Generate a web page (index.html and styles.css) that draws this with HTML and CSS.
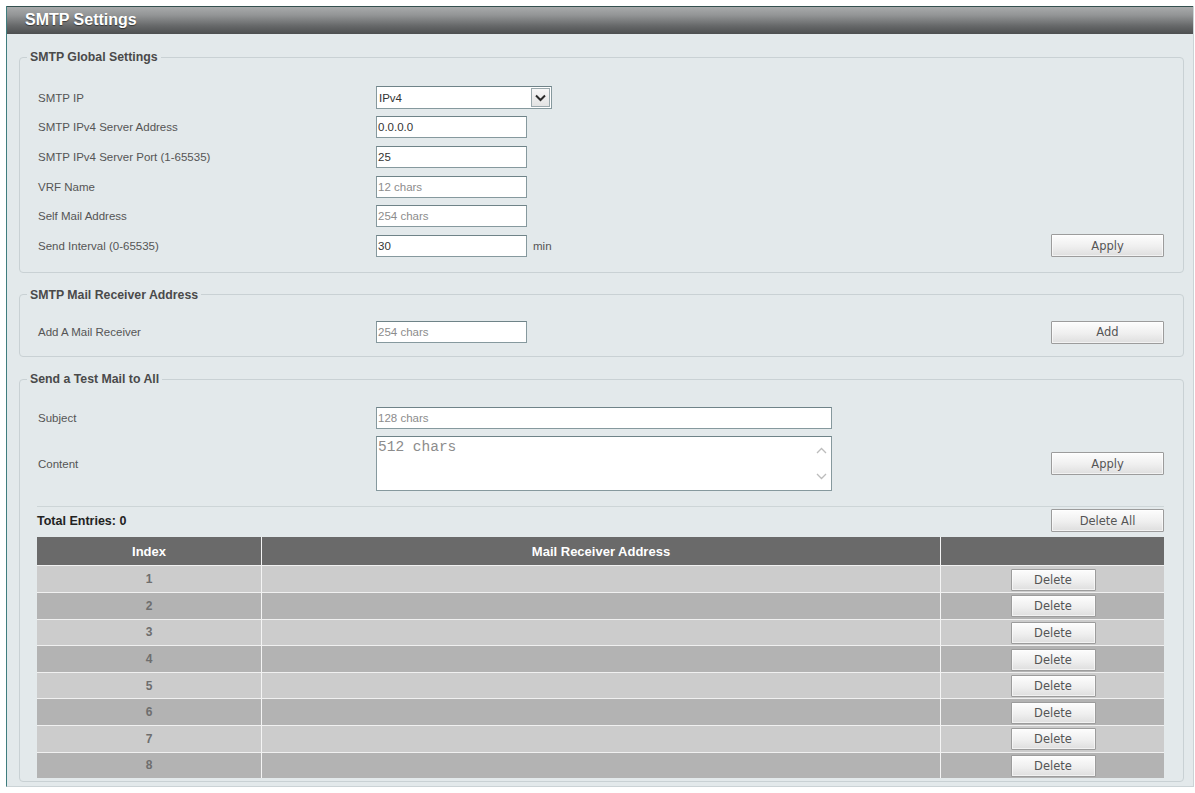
FILE: index.html
```html
<!DOCTYPE html>
<html>
<head>
<meta charset="utf-8">
<title>SMTP Settings</title>
<link rel="stylesheet" href="styles.css">
</head>
<body>
<div class="page">
  <div class="frame">
    <div class="titlebar">SMTP Settings</div>
    <div class="content">

      <fieldset class="group g1">
        <legend>SMTP Global Settings</legend>
        <div class="fs-body b1">
          <div class="row">
            <span class="lbl">SMTP IP</span>
            <div class="select">
              <span class="sel-val">IPv4</span>
              <span class="sel-btn"><svg width="11" height="8" viewBox="0 0 11 8"><path d="M1 1.5 L5.5 6 L10 1.5" fill="none" stroke="#2b2b2b" stroke-width="2"/></svg></span>
            </div>
          </div>
          <div class="row">
            <span class="lbl">SMTP IPv4 Server Address</span>
            <input class="txt" type="text" value="0.0.0.0">
          </div>
          <div class="row">
            <span class="lbl">SMTP IPv4 Server Port (1-65535)</span>
            <input class="txt" type="text" value="25">
          </div>
          <div class="row">
            <span class="lbl">VRF Name</span>
            <input class="txt" type="text" placeholder="12 chars">
          </div>
          <div class="row">
            <span class="lbl">Self Mail Address</span>
            <input class="txt" type="text" placeholder="254 chars">
          </div>
          <div class="row">
            <span class="lbl">Send Interval (0-65535)</span>
            <input class="txt" type="text" value="30">
            <span class="unit">min</span>
            <button class="btn btn-lg">Apply</button>
          </div>
        </div>
      </fieldset>

      <fieldset class="group g2">
        <legend>SMTP Mail Receiver Address</legend>
        <div class="fs-body b2">
          <div class="row">
            <span class="lbl">Add A Mail Receiver</span>
            <input class="txt" type="text" placeholder="254 chars">
            <button class="btn btn-lg">Add</button>
          </div>
        </div>
      </fieldset>

      <fieldset class="group g3">
        <legend>Send a Test Mail to All</legend>
        <div class="fs-body b3">
          <div class="row">
            <span class="lbl">Subject</span>
            <input class="txt txt-wide" type="text" placeholder="128 chars">
          </div>
          <div class="row row-content">
            <span class="lbl">Content</span>
            <div class="ta-wrap">
              <textarea class="ta" placeholder="512 chars"></textarea>
              <span class="ta-arrows">
                <svg width="11" height="7" viewBox="0 0 11 7"><path d="M1 6 L5.5 1.5 L10 6" fill="none" stroke="#bcbcbc" stroke-width="1.3"/></svg>
                <svg width="11" height="7" viewBox="0 0 11 7"><path d="M1 1 L5.5 5.5 L10 1" fill="none" stroke="#bcbcbc" stroke-width="1.3"/></svg>
              </span>
            </div>
            <button class="btn btn-lg">Apply</button>
          </div>

          <div class="entries">
            <div class="entries-bar">
              <span class="total">Total Entries: 0</span>
              <button class="btn btn-lg">Delete All</button>
            </div>
            <table class="grid">
              <thead>
                <tr><th class="c-idx">Index</th><th class="c-addr">Mail Receiver Address</th><th class="c-act"></th></tr>
              </thead>
              <tbody>
                <tr class="odd"><td>1</td><td></td><td><button class="btn btn-sm">Delete</button></td></tr>
                <tr class="even"><td>2</td><td></td><td><button class="btn btn-sm">Delete</button></td></tr>
                <tr class="odd"><td>3</td><td></td><td><button class="btn btn-sm">Delete</button></td></tr>
                <tr class="even"><td>4</td><td></td><td><button class="btn btn-sm">Delete</button></td></tr>
                <tr class="odd"><td>5</td><td></td><td><button class="btn btn-sm">Delete</button></td></tr>
                <tr class="even"><td>6</td><td></td><td><button class="btn btn-sm">Delete</button></td></tr>
                <tr class="odd"><td>7</td><td></td><td><button class="btn btn-sm">Delete</button></td></tr>
                <tr class="even"><td>8</td><td></td><td><button class="btn btn-sm">Delete</button></td></tr>
              </tbody>
            </table>
          </div>
        </div>
      </fieldset>

    </div>
  </div>
</div>
</body>
</html>
```

FILE: styles.css
```css
* { box-sizing: border-box; }

html, body {
  margin: 0;
  padding: 0;
  background: #ffffff;
}

body {
  font-family: "Liberation Sans", Arial, sans-serif;
  font-size: 11.5px;
  color: #555555;
}

.page {
  padding: 6px 1px 0 6px;
}

.frame {
  width: 1188px;
  background: #e3e9eb;
  border-left: 1px solid #3f7d7e;
  border-right: 1px solid #cbd3d6;
  border-bottom: 1px solid #cbd3d6;
}

.titlebar {
  height: 28px;
  border-top: 1px solid #34504f;
  background: linear-gradient(to bottom, #a8aaab 0%, #939596 30%, #666869 70%, #4d4f50 100%);
  color: #ffffff;
  font-family: "Liberation Sans", Arial, sans-serif;
  font-weight: bold;
  font-size: 16px;
  line-height: 25px;
  padding-left: 18px;
  text-shadow: 0 1px 1px rgba(0, 0, 0, 0.5);
}

.content {
  padding: 0 9px 4px 12px;
}

.group {
  margin: 0;
  padding: 0;
  border: 1px solid #c9d1d4;
  border-radius: 4px;
  min-width: 0;
}

.g1 { margin-top: 16px; }
.g2 { margin-top: 15px; }
.g3 { margin-top: 15px; }

.group legend {
  margin-left: 7px;
  padding: 0 3px;
  font-family: "Liberation Sans", Arial, sans-serif;
  font-weight: bold;
  font-size: 12.3px;
  line-height: 14px;
  color: #4a4a4a;
}

.fs-body {
  padding-left: 17px;
  padding-right: 19px;
}

.b1 { padding-top: 19px; padding-bottom: 11px; }
.b2 { padding-top: 16px; padding-bottom: 9px; }
.b3 { padding-top: 16.7px; padding-bottom: 3px; }

.row {
  display: flex;
  align-items: center;
  height: 29.6px;
}

.lbl {
  width: 339px;
  flex: none;
  padding-left: 1px;
  color: #555555;
  font-size: 11.5px;
}

.txt {
  width: 151px;
  height: 22px;
  border: 1px solid #86999e;
  border-top-color: #6f8388;
  background: #ffffff;
  padding: 0 1px;
  font-family: "Liberation Sans", Arial, sans-serif;
  font-size: 11.5px;
  color: #333333;
  outline: none;
}

.txt::placeholder {
  color: #8c8c8c;
}

.txt-wide {
  width: 456px;
}

.select {
  width: 176px;
  height: 23px;
  display: flex;
  align-items: center;
  justify-content: space-between;
  border: 1px solid #86999e;
  border-top-color: #6f8388;
  background: #ffffff;
  padding: 0 1px 0 2px;
  color: #333333;
  font-size: 11.5px;
}

.sel-btn {
  width: 19px;
  height: 19px;
  display: flex;
  align-items: center;
  justify-content: center;
  border: 1px solid #9aa8ac;
  background: linear-gradient(to bottom, #f7f7f7, #e3e3e3);
}

.unit {
  margin-left: 6px;
  color: #555555;
}

.btn {
  font-family: "DejaVu Sans", Verdana, sans-serif;
  font-size: 11.5px;
  color: #555555;
  border: 1px solid #9c9c9c;
  border-radius: 1px;
  background: linear-gradient(to bottom, #fdfdfd 0%, #efefef 55%, #dedede 100%);
  box-shadow: inset 0 0 0 1px rgba(255, 255, 255, 0.6);
  padding: 0;
  cursor: pointer;
}

.btn-lg {
  width: 113px;
  height: 23px;
  margin-left: auto;
}

.btn-sm {
  width: 85px;
  height: 22px;
}

.row-content {
  height: 55px;
  margin-top: 4px;
}

.ta-wrap {
  position: relative;
  width: 456px;
  height: 55px;
}

.ta {
  display: block;
  width: 456px;
  height: 55px;
  resize: none;
  overflow: hidden;
  border: 1px solid #86999e;
  border-top-color: #6f8388;
  background: #ffffff;
  padding: 2px 1px;
  font-family: "Liberation Mono", "Courier New", monospace;
  font-size: 14.5px;
  line-height: 16px;
  color: #333333;
  outline: none;
}

.ta::placeholder {
  color: #8c8c8c;
}

.ta-arrows {
  position: absolute;
  right: 5px;
  top: 11px;
  height: 33px;
  display: flex;
  flex-direction: column;
  justify-content: space-between;
}

.ta-arrows svg {
  display: block;
}

.entries {
  margin-top: 15px;
  border-top: 1px solid #cdd5d7;
}

.entries-bar {
  height: 27px;
  display: flex;
  align-items: center;
  justify-content: space-between;
}

.total {
  font-weight: bold;
  font-size: 12.5px;
  color: #222222;
}

.grid {
  width: 100%;
  margin-top: 3px;
  border-collapse: separate;
  border-spacing: 0;
  table-layout: fixed;
}

.grid th {
  height: 28px;
  padding: 0;
  background: #6a6a6a;
  color: #ffffff;
  font-family: "Liberation Sans", Arial, sans-serif;
  font-weight: bold;
  font-size: 13px;
  text-align: center;
}

.c-idx { width: 224px; }
.c-act { width: 224px; }

.grid th + th,
.grid td + td {
  border-left: 1px solid #f4f4f4;
}

.grid tbody tr {
  height: 26.6px;
}

.grid td {
  padding: 0;
  border-top: 1px solid #f0f0f0;
  text-align: center;
  vertical-align: middle;
  font-weight: bold;
  font-size: 12px;
  color: #6e6e6e;
}

.grid tr.odd td { background: #cccccc; }
.grid tr.even td { background: #b3b3b3; }

.grid td .btn-sm {
  display: inline-block;
  vertical-align: middle;
  margin: 1px 0 0 1px;
  font-weight: normal;
}
```
